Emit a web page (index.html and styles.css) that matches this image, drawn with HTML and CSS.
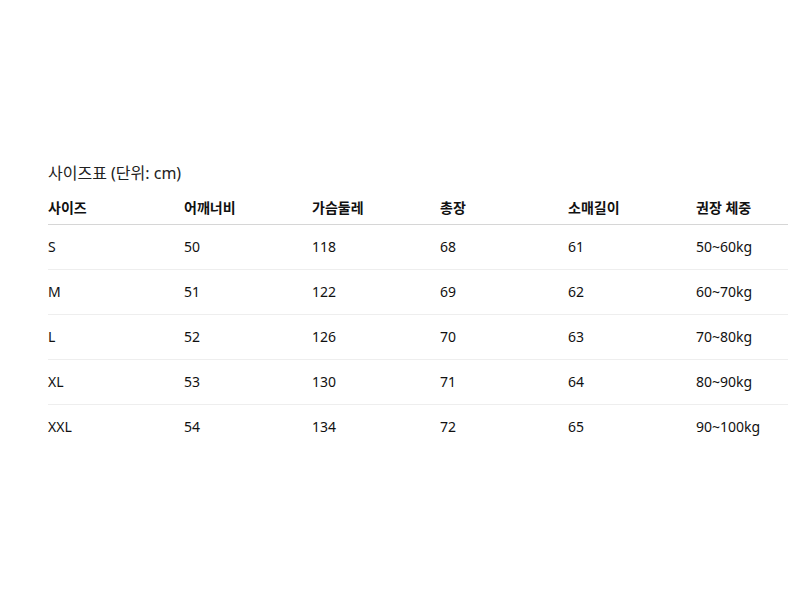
FILE: index.html
```html
<!DOCTYPE html>
<html lang="ko">
<head>
<meta charset="utf-8">
<title>사이즈표</title>
<link rel="stylesheet" href="styles.css">
</head>
<body>
<div class="wrap">
  <table class="size-table">
    <caption>사이즈표 (단위: cm)</caption>
    <thead>
      <tr><th class="c1">사이즈</th><th class="c">어깨너비</th><th class="c">가슴둘레</th><th class="c">총장</th><th class="c">소매길이</th><th>권장 체중</th></tr>
    </thead>
    <tbody>
      <tr><td>S</td><td>50</td><td>118</td><td>68</td><td>61</td><td>50~60kg</td></tr>
      <tr><td>M</td><td>51</td><td>122</td><td>69</td><td>62</td><td>60~70kg</td></tr>
      <tr><td>L</td><td>52</td><td>126</td><td>70</td><td>63</td><td>70~80kg</td></tr>
      <tr><td>XL</td><td>53</td><td>130</td><td>71</td><td>64</td><td>80~90kg</td></tr>
      <tr><td>XXL</td><td>54</td><td>134</td><td>72</td><td>65</td><td>90~100kg</td></tr>
    </tbody>
  </table>
</div>
</body>
</html>
```
FILE: styles.css
```css
html, body { margin: 0; padding: 0; background: #fff; }
body {
  font-family: "Noto Sans", "Noto Sans CJK KR", sans-serif;
  color: #111;
}
.wrap {
  padding: 160px 12px 0 48px;
}
.size-table {
  width: 740px;
  border-collapse: collapse;
  table-layout: fixed;
  font-size: 14px;
}
.size-table caption {
  text-align: left;
  font-size: 16px;
  line-height: 26px;
  padding-bottom: 6px;
  color: #222;
}
.size-table th {
  text-align: left;
  font-weight: 700;
  padding: 6px 0 6px 0;
  line-height: 20px;
  border-bottom: 1px solid #d6d6d6;
}
.size-table th.c1 { width: 136px; }
.size-table th.c { width: 128px; }
.size-table td {
  padding: 12px 0;
  line-height: 20px;
  border-bottom: 1px solid #eee;
}
.size-table tbody tr:last-child td { border-bottom: none; }
```
